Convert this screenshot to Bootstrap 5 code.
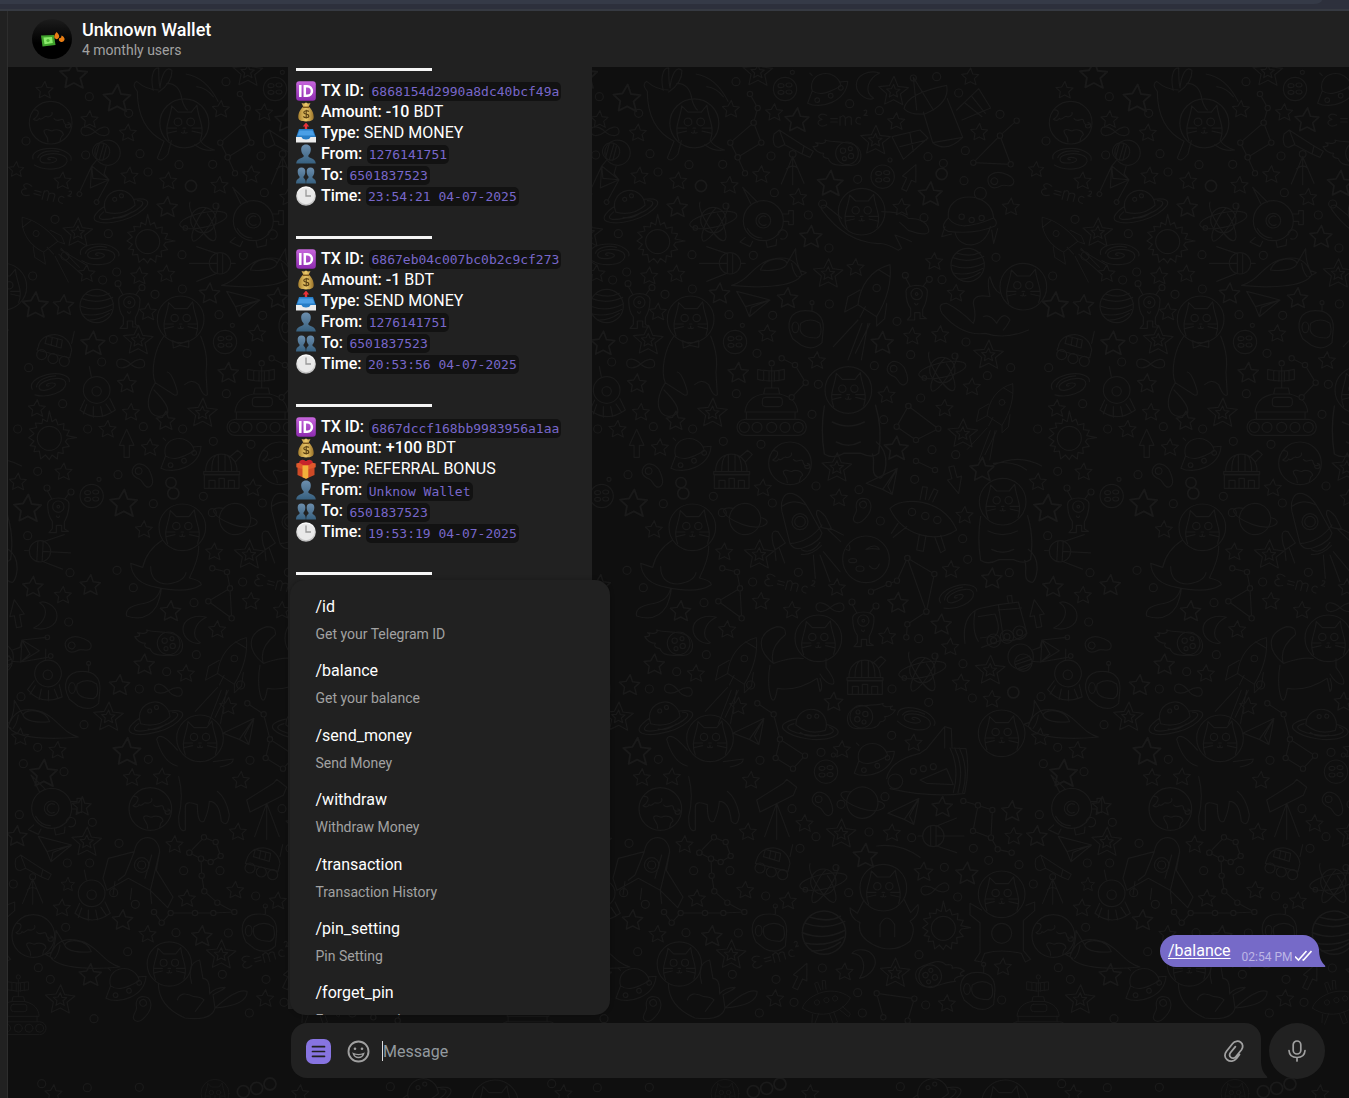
<!DOCTYPE html>
<html lang="en">
<head>
<meta charset="utf-8">
<meta name="viewport" content="width=device-width, initial-scale=1">
<title>Unknown Wallet</title>
<link href="https://cdn.jsdelivr.net/npm/bootstrap@5.3.0/dist/css/bootstrap.min.css" rel="stylesheet">
<style>
body{background:#0f0f0f;color:#fff;font-family:Roboto,"Liberation Sans",sans-serif;font-size:16px;line-height:21px}
.strip{height:11px;flex:none;background:#2d303c;border-bottom:2px solid #363a42}
.strip div{width:1322px;height:4px;background:#353a47;border-bottom-right-radius:8px 4px}
.rail{width:8px;flex:none;background:#212121;border-right:1px solid #2d2d2d}
.chat-head{height:56px;flex:none;background:#212121;padding-left:24px}
.ava{width:40px;height:40px}
.who{margin-left:10px}
.name{font-size:18px;line-height:22px;font-weight:500}
.sub{font-size:14px;line-height:18px;color:#a2a2a2}
.chat{min-height:0}
.wall{left:0;top:0;width:100%;height:100%;z-index:0}
.layer{z-index:1}
.msgs{height:956px;padding-left:280px;padding-right:30px}
.inc{width:303.500px;height:942px;background:#212121;padding-left:8px;margin-top:0}
.tx-list{margin-top:-8px}
.ln{height:21.03px;line-height:21.03px;white-space:pre}
.ln b{font-weight:500}
.sep::before{content:"";width:136px;height:3px;background:#f5f5f5}
.ln svg{width:20px;height:20px;margin-right:5px;flex:none}
.ln code{font:13px/19px "DejaVu Sans Mono",monospace;color:#7867ca;background:#121212;border-radius:5px;padding:0 2px;height:19px;margin-left:.5px;margin-top:2.500px}
.ln code.tx-hash{padding-left:3px}
.outg{height:32px;width:159px;margin-bottom:56px;background:#766ac8;border-radius:16px 16px 0 16px;padding-left:8px}
.outg u{text-underline-offset:2px;margin-top:-1px}
.outg small{font-size:12px;color:#bdb6e6;margin-left:11px;margin-top:12px}
.outg .ticks{margin:10px 0 0 3px}
.clip-ico{margin-right:16px}
.tail{position:absolute;right:-7px;bottom:0}
.cmds{position:absolute;left:282px;top:513px;width:320px;height:435px;border-radius:15px;background:#212121;box-shadow:0 0 4px rgba(0,0,0,.28);padding:16px 26px 0 25.500px}
.cmd{height:64.4px}
.cmd p{margin:0;line-height:22px;padding-bottom:6px}
.cmd span{display:block;font-size:14px;line-height:20px;color:#a2a2a2}
.bar{height:55px;padding-left:283px}
.compose{width:970px;height:55px;background:#212121;border-radius:16px 16px 0 16px;padding:1px 0 0 15px}
.caret{width:1px;height:20px;background:#ddd;margin-left:12px}
.ph{color:#939a9f}
.mic{width:56px;height:56px;background:#212121;margin-left:8px}
</style>
<script src="https://cdn.jsdelivr.net/npm/bootstrap@5.3.0/dist/js/bootstrap.bundle.min.js"></script>
</head>
<body class="vh-100 overflow-hidden d-flex flex-column">
<svg width="0" height="0" class="position-absolute">
<defs>
<linearGradient id="gp" x2="0" y2="1"><stop stop-color="#c766dc"/><stop offset="1" stop-color="#8e2bb0"/></linearGradient>
<linearGradient id="gb" x2="0" y2="1"><stop stop-color="#6c8ead"/><stop offset="1" stop-color="#37607f"/></linearGradient>
<linearGradient id="gy" x2="1"><stop stop-color="#a9812f"/><stop offset=".5" stop-color="#ecca6c"/><stop offset="1" stop-color="#9a7228"/></linearGradient>
<linearGradient id="gw" x2="0" y2="1"><stop stop-color="#fff"/><stop offset="1" stop-color="#bbb"/></linearGradient>
<symbol id="e-id" viewBox="0 0 20 20"><rect x=".2" y=".2" width="19.6" height="19.6" rx="3" fill="url(#gp)"/><path d="M4.300 4v12M8.800 5.200v9.600h2.400c6.300 0 6.300-9.600 0-9.600z" fill="none" stroke="#fff" stroke-width="2.500"/></symbol>
<symbol id="e-bag" viewBox="0 0 20 20"><path d="M7.3 4.8 5.500 1l2.500.6L10 .6l2 1 2.500-.6-1.800 3.800c3 2 5 6.500 5 10.200 0 3-2 4.400-7.700 4.400s-7.700-1.400-7.700-4.400c0-3.700 2-8.200 5-10.200z" fill="url(#gy)"/><path d="M6.800 5.300h6.400" stroke="#80591c" stroke-width="1.500"/><path d="M12.800 9.700c-1-1.400-5-1.400-5 .8 0 2.400 5 1 5 3.400 0 2.200-4.400 2.200-5.400.5M10.200 7.800v8.800" stroke="#5b4113" stroke-width="1.200" fill="none"/></symbol>
<symbol id="e-out" viewBox="0 0 20 20"><path d="M3 6h14l3 8.500v4.200H0v-4.200z" fill="#277dc6"/><path d="M3.500 7.500h13l2 5h-17z" fill="#4a9fe6"/><path d="M0 14h5.500q.8 2.500 4.500 2.500t4.500-2.500H20v5.500H0z" fill="#ececec"/><path d="M10-.5 13.200 3.500h-2v2.500h-2.400v-2.500h-2z" fill="#e8333a"/></symbol>
<symbol id="e-man" viewBox="0 0 20 20"><path d="M10 .5c3.400 0 5 2.300 4.800 5.500-.2 2.500-1.200 4.200-2.400 5.300v1.500c1.500 1.600 7 1.700 7.400 6.700H.2c.4-5 5.900-5.100 7.400-6.700v-1.500C6.400 10.200 5.400 8.500 5.200 6 5 2.800 6.600.5 10 .5z" fill="url(#gb)"/></symbol>
<symbol id="e-men" viewBox="0 0 20 20"><path id="bust" d="M5.500 2.500c2.700 0 4 1.700 3.800 4.500-.1 2-.9 3.500-1.800 4.500v1.200c1 1.200 2.300 1.400 2.300 5.800H0c0-4.400 2.500-4.600 3.500-5.800v-1.200c-.9-1-1.700-2.500-1.800-4.500C1.500 4.200 2.800 2.500 5.500 2.500z" fill="url(#gb)"/><use href="#bust" transform="matrix(-1 0 0 1 20 0)"/></symbol>
<symbol id="e-clock" viewBox="0 0 20 20"><circle cx="10" cy="10" r="9.800" fill="url(#gw)"/><circle cx="10" cy="10" r="8.300" fill="#e9e9e9"/><path d="M10 3.500V10h5" stroke="#999" stroke-width="1.300" fill="none"/></symbol>
<symbol id="e-gift" viewBox="0 0 20 20"><path d="M1.500 7 10 9l8.500-2v9L10 19.800 1.500 16z" fill="#cf4a26"/><path d="M.3 4.500 10 2l9.700 2.500v3.700L10 11 .3 8.200z" fill="#e0592c"/><path d="M6.500 6.500h5.800v12.300L10 19.800l-3.500-1.500z" fill="#f2b13b"/><path d="M3 3.500C4 0 9 0 10 3c1-3 6-3 7 .5L13 6H7z" fill="#c8232b"/></symbol>
<g id="w-star"><path d="M2-26 8-8 26-6 13 6 18 24 1 15-15 23-12 5-25-7-8-9z"/></g>
<g id="w-star2"><path d="M2-44 14-14 45-10 21 9 28 41 1 26-26 39-20 8-44-13-12-16z"/><path d="M1-20 6-6 20-5 9 4 13 18 0 11-12 18-9 4-20-6-6-7z"/></g>
<circle id="w-dot" r="12"/>
<g id="w-earth"><circle r="64"/><path d="M-50-38C-30-40-35-20-52-10q12 8 18-3c8 8 12-6 20-6 8 4 22-2 18-12M10-12c10 14 22-4 28 4 2 14 8 18 20 12M-20 24c12-12 18 8 30-2 10-2 26 0 28 14-10 6-8 14-10 20M-20 24c0 16 12 10 12 34M44 8a8 8 0 1 0 8-8"/></g>
<g id="w-sun"><circle r="36"/><path d="M0-82-6-50-20-58-22-44-42-46-38-32-60-28-46-14-62-2-46 8-58 22-42 24-46 40-30 38-26 62-12 50 0 64 8 50 24 62 26 42 42 46 40 28 60 24 48 10 54 2 82-2 52-8 60-24 42-26 44-44 26-40 20-58 8-50z"/></g>
<g id="w-saturn" transform="rotate(-12)"><path d="M-46 12c-6-34 18-56 46-56s48 26 44 54M-46 12q46 24 90-2M-46-6c-80 34-20 56 46 52s124-48 44-54M-52 10c-40 20 0 28 52 24s90-28 54-36M-28 32q28 12 56-4"/><circle cx="-12" cy="-20" r="6"/><circle cx="10" cy="-26" r="6"/></g>
<g id="w-ring" transform="rotate(20)"><circle r="47"/><path d="M-44-18c-50 10-20 36 44 36s88-44 42-38"/></g>
<g id="w-galaxy"><path d="M-58 4c-6-20 20-32 54-32 40 0 66 22 60 36M-54 22C-20 42 36 36 44 12c4-20-32-28-60-22s-28 26 0 26 38-12 20-16-24 6-10 6M-44 0c8-20 40-24 64-18"/></g>
<g id="w-atom"><circle r="38"/><ellipse rx="72" ry="22" transform="rotate(-12)"/><path d="M-40-54c-10 26 50 120 72 116 16-8-4-60-20-80M44-50c4 34-60 124-76 112-10-16 16-76 40-98"/><circle cx="38" cy="-42" r="9"/><circle cx="-54" cy="24" r="7"/></g>
<g id="w-sub"><circle r="60"/><circle r="22"/><path d="M8-12a14 14 0 1 0 0 24M-48 24q16 28 44 28M-36-48-62-100-18-56M58-20h18v-10h14v42H76V2H60M-54 50l-16 14 30 14 8-16M8 60l4 20 26-6 2-18M44 42a14 14 0 1 1 8 12"/></g>
<g id="w-probe"><circle cx="20" r="32"/><path d="M12-30v60M28-30v60M-72 0h84M52 0h14M10-30-50-50M10 30-50 54"/></g>
<g id="w-ship"><path d="M-120 46C-60 30-50-36 30-36c30 0 50 20 60 50-20 40-140 40-210 32M-34 0c14-40 74-40 80-20-6 20-50 24-80 20M46-20 72-64q0 40 14 66l18 6-22 12M60-20q4 26 16 40"/></g>
<g id="w-plane"><path d="M-50-36 50-10-12 40-24 10zM-24 10 50-10-6 12-12 40"/></g>
<g id="w-alien"><path d="M-32-16c0-24 64-24 64 0 0 30-8 44-14 54v20l12 8H10V48h-16v22h-22l10-12V36c-8-10-14-30-14-52M-20-32l-14-26M20-32l12-16M-6 20q6 10 10 0"/><circle cy="-8" r="17"/><circle cy="-8" r="4"/><circle cx="-34" cy="-64" r="9"/><circle cx="38" cy="-52" r="9"/></g>
<g id="w-ball"><circle r="50"/><path d="M-34-36q44 14 72-2M-44-22q44 18 92-4M-50 0q50 20 100-6M-44 24q50 10 90-14M-28 42q36 2 66-20"/></g>
<g id="w-button"><circle r="35"/><ellipse cx="-12" cy="-10" rx="9" ry="6"/><ellipse cx="12" cy="-12" rx="9" ry="6"/><ellipse cx="-12" cy="10" rx="9" ry="6"/><ellipse cx="12" cy="9" rx="9" ry="6"/><circle cx="22" cy="-50" r="6"/></g>
<g id="w-ufo" transform="rotate(-10)"><path d="M-44 0C-50-60 40-60 44 0-10 20-30 14-44 0M-44 0-64 34C-30 60 50 50 66-10L44-12M-36-46l-6-8"/><circle cx="-34" cy="30" r="7"/><circle cx="8" cy="24" r="7"/><circle cx="42" cy="6" r="7"/></g>
<g id="w-moon"><path d="M34-36C0-46-36-30-36 0S0 48 16 40C-16 20 0-20 34-36z"/></g>
<g id="w-emc"><path d="M-50-14c-20-10-34 6-14 12-24 6-8 28 14 16M-38-4h20M-38 6h20M-10 16v-26M-10-6c8-12 16-6 16 4v18M6-4c10-10 20-6 18 4v14M52-6c-14-10-24 20 0 18M62-28c10-6 12 6 0 14h10"/></g>
<g id="w-scope"><path d="M-56-60-40-72-22-60 34-24 28 0-24-28-42-20C-60-20-60-44-56-60M-40-72-24-30M34-24 62-8 52 10 28 0M0 8-34 90M0 8v84M0 8l34 80M-18 44q20-16 34 0"/><circle r="10"/></g>
<g id="w-comet"><path d="M-76-20c16 0 20-6 8-12 24 6 34-2 28-8 30 10 60 0 90 16 26 14 24 60-10 60S-20 40-30 16C-44 14-50 8-44 0-60 0-70-10-76-20"/><circle cx="26" r="34"/><circle cx="14" cy="-8" r="8"/><circle cx="38" cy="8" r="8"/><circle cx="18" cy="16" r="6"/><circle cx="36" cy="-14" r="6"/></g>
<g id="w-sat"><path d="M-108-24Q-100-70 20-94 30-40-46-8-90-4-108-24M-50-14-22 78Q20 110 68 62L22-54M-22 78 68 62M-80-118-20-20M-80-118-70-20M50-20 116-84 152-26 66 10M76-40l50 40M96-60l40 50M-144 60-60 40-36 64-110 128zM-120 90l80-20M-90 50l10 54"/><circle cx="-80" cy="-116" r="9"/></g>
<g id="w-rocket"><path d="M60-86C0-70-30-20-36 34L20 70C50 20 66-30 60-86M24-72 60-50M-30-10-66 10-76 56-36 34M50 30 44 76 20 98V70M-14 40-30 72M-36 80-110 160M-24 90-66 200M0 90-44 180M-6 90-26 200"/><circle cx="20" cy="-16" r="11"/></g>
<g id="w-bigrocket"><path d="M-22-84C-50-90-60-60-54-30L-30 66Q-16 90 16 76 60 60 66 34L26-38Q4-78-22-84M-54-46Q-20-70 18-50M-30 66Q30 60 66 10M-66 30q-26-10-14 40l6 14 30-20zM50-20q-4-30 26 4l20 40-30-6zM4 84q30 16 56-22M4 98q30 4 60-26M-62 80l16 44M-76 80l4 36M80 20l42 40M90 20l40 20M40 100l6 70M60 100l30 80M70 90l50 60"/><circle r="24"/><circle r="16"/></g>
<g id="w-shuttle"><path d="M-150 66Q-140 10-50-10L-30-24 24-90 44-84 46-26 88-24Q100 40 84 110-20 124-140 96M40-26q30 60 10 134M54-26q30 60 10 134M68-26q30 60 10 134M-50 70 30 36 50 84-30 80zM24-90v64"/><circle cx="-70" cy="44" r="9"/><circle cx="-40" cy="36" r="9"/><circle cx="-10" cy="30" r="9"/><circle cx="-124" cy="74" r="22"/></g>
<g id="w-upshuttle"><path d="M-22-40C-14-96 50-96 54-40L44 16 94 96 78 128 26 76-40 40-104 76-116 40-100-20-22-40-50 30M54-40 26 76M30-30 10 40M-50 30l-20 16M-80 50l-6 40M-30 70l-4 34M26 76l4 40"/><circle r="22"/><circle r="12"/></g>
<g id="w-helmet"><path d="M-42 36C-66-10-50-48-4-48S50-20 50 4L46 48Q20 74-16 56L-42 36M-18-10q30-20 58 0 10 36-10 44-60 0-48-44M16-48v-20"/><circle cx="16" cy="-72" r="6"/><ellipse cx="-34" cy="2" rx="10" ry="16"/></g>
<g id="w-tank"><rect x="-104" y="38" width="208" height="48" rx="24"/><circle cx="-82" cy="62" r="15"/><circle cx="-44" cy="62" r="15"/><circle cy="62" r="15"/><circle cx="40" cy="62" r="15"/><circle cx="80" cy="62" r="15"/><path d="M-76 38V16M70 38V16M-80 16C-76-20-50-34-24-38L24-38C60-30 76-10 78 16zM-24-38l4-18h40l4 18M0-56v-62M-42-112q42 10 80 0v30q-40 10-80 0zM-24-108v30M-8-106v30M8-106v30M22-108v30"/><rect x="-28" y="-28" width="60" height="28" rx="10"/><circle cy="-130" r="8"/></g>
<g id="w-face"><circle r="70"/><path d="M-44 50C-60 10-40-10-36-50L-18-32H20L36-52C40-10 60 10 46 48M-22 22-48 28M-22 14-48 14M22 22 48 28M22 14l26 0M-8 26q8 6 8-6 0 12 8 6M-4 14h8"/><circle cx="-18" cy="-4" r="11"/><circle cx="18" cy="-4" r="11"/></g>
<g id="w-sit"><path d="M-50 50C-80 90-90 160-76 190L-20 226q20 10 0-40-10-26-20-28M60 50c20 50 20 80 16 110l4 66q-10 10-26-30-20-20-42 0M-76 190c-50 80 0 120 36 92 10-20-30-60-40-70M-24 64l20 10 28-10v20l-26-6-20 8z"/></g>
<g id="w-fly"><path d="M-60 20-110-20q-20 0-8 16Q-50 90 50 96q20-4 60 20l10-6-20-40q30 10 50 20M60 0q60 0 80 20 50 0 60 30 10 30-60 6-10-10-26-24"/></g>
<g id="w-stand"><path d="M-60 40q-10 60 0 120 20 14 50-2h40q30 14 46 0 10-60-8-120M-40 80q40 20 80 0M-30 130q30 16 60 0M70 130c40 30 20 90 10 90-30-4-10-40-20-60"/></g>
<g id="w-bean"><path d="M-30-18c14-30 44-10 52 8s14 40-2 46-18-20-30-24-26-14-20-30"/><circle cx="-12" cy="-12" r="10"/></g>
<g id="w-saucer"><path d="M-70 4C-80-80 60-80 66 4-20 40-50 30-70 4M-70 4q-30 30 0 40 80 10 140-16 10-10-4-24M-50 46C-40 100 40 100 56 30M-80 30l-10 30 30-8M60 40l6 40 12-44"/><circle cx="26" cy="-70" r="18"/><circle cx="-30" r="8"/><circle cy="10" r="8"/><circle cx="30" cy="4" r="8"/></g>
<g id="w-pod"><circle cy="-20" r="40"/><circle cy="-16" r="14"/><path d="M-36 10-50 40q50 40 106 0L40 6M-30 24l-10 28M-10 30v32M12 30l6 30M28 22l16 24M-16-60l-6-30"/></g>
<g id="w-rover"><path d="M-50 0C-40-50 40-50 50 10L44 34-54 10zM-30-10l6-22 46 12-4 24zM-8-28l-4 24M8-24l-4 24M50-10l8-36"/><circle cx="-40" cy="24" r="15"/><circle cx="-6" cy="36" r="15"/><circle cx="28" cy="44" r="15"/></g>
<g id="w-bulb"><circle cx="-28" cy="-2" r="38"/><circle cx="-20" cy="16" r="26"/><path d="M-42 12 0-4M-44 22 4 6M-36 34 6 18M8-22 30-30 36-52 88-20 32 14 6 12M36-52 32 14M36-52 60-10 32 14M36-52 108-60M32 14 112 0"/><circle cx="112" cy="-60" r="7"/><circle cx="122" cy="-4" r="7"/></g>
<g id="w-arrow"><path d="M0-42 22 6H8v36H-8V6h-14z"/></g>
<g id="w-inf"><path d="M0 0C-16-16-42-22-42-2S-16 14 0 0 40-22 42-2 14 14 0 0"/></g>
<g id="w-obs"><path d="M-52 50V10h104v40zM-54 0H54V8H-54zM-48 0C-50-70 48-70 46 0M-30 0q0-40 14-50M-10 0v-50M10 0v-50M30 0q0-40-14-50M24-44l24-20 14 12-20 22M-38 50V26h18v24M-8 50V20H8v30M20 50V26h18v24"/></g>
<g id="w-legs"><path d="M-100-34C-70-70 60-70 100 30 40 70-60 50-100-34M-76 10-96 40M-50 20-90 52M-12 44-20 90 0 94 8 46M34 50 52 98 66 90 52 46M-10-60l8-40 14 2-6 36M16-60l16-34 12 6-16 34"/><circle cx="-34" cy="-24" r="11"/><circle cx="6" cy="-12" r="11"/><circle cx="42" r="11"/></g>
<g id="w-truck"><path d="M-90 60C-100-10-70-40-40-46L10-56 70-64 96 30Q60 60 20 50L-40 72M10-56 26 50M10-40l70-6M-60-36q-10 60 10 90M-50-20l50-8q20 50 0 66l-44 6M40-62l-4-20 14-2 2 20"/><circle cx="-4" cy="52" r="20"/><circle cx="36" cy="40" r="20"/><circle cx="74" cy="28" r="20"/><circle cx="-4" cy="52" r="9"/><circle cx="36" cy="40" r="9"/><circle cx="74" cy="28" r="9"/></g>
<g id="w-crater"><circle r="70"/><path d="M-60-30q16 10 10-12M0-30q30-20 40 0-20-4-40 0M10 20q20 20 30-6"/><ellipse cx="-40" cy="4" rx="12" ry="6"/><ellipse cx="-18" cy="28" rx="12" ry="8"/></g>
</defs>
</svg>

<div class="strip"><div></div></div>
<div class="d-flex flex-grow-1 overflow-hidden">
  <aside class="rail"></aside>
  <main class="d-flex flex-column flex-grow-1">
    <header class="chat-head d-flex align-items-center">
      <svg class="ava" viewBox="0 0 40 40"><defs><linearGradient id="ga" x2="0" y2="1"><stop stop-color="#1c1c1c"/><stop offset=".6" stop-color="#000"/></linearGradient></defs><circle cx="20" cy="20" r="20" fill="url(#ga)"/><path d="M9 16.500l13-.5 1.500 10-13 1.500z" fill="#3fa12c"/><path d="M11.500 18.500l8.500-.5.800 6-8.300 1.300z" fill="#8bec6b"/><circle cx="16" cy="21.500" r="1.600" fill="#4cb535"/><path d="M24.500 13q3.500 3 2.500 5.500-2 3-4.500.5-1-2.500 2-6zM29.500 16.500q3.500 1.500 3 4.500-1.500 3-4.500 1.500-2-1.500-.5-3.500 2 .5 2-2.500z" fill="#e87e14"/></svg>
      <div class="who">
        <div class="name">Unknown Wallet</div>
        <div class="sub">4 monthly users</div>
      </div>
    </header>
    <section class="chat flex-grow-1 position-relative overflow-hidden">
      <svg class="wall position-absolute" viewBox="8 67 1341 1031" fill="none" stroke="#1a1a1a" stroke-width="3.600" stroke-linejoin="round" stroke-linecap="round"><g id="tile"></g><use href="#tile" x="-510"/><use href="#tile" x="-1020"/><use href="#tile" x="510"/></svg>
      <div class="layer position-relative">
        <div class="msgs d-flex justify-content-between">
          <div class="inc"><div class="tx-list" id="txs"></div></div>
          <div class="outg position-relative align-self-end d-flex align-items-center">
            <u>/balance</u><small>02:54 PM</small>
            <svg class="ticks" width="17" height="12" viewBox="0 0 17 12" fill="none" stroke="#fff" stroke-width="1.600"><path d="M0 6.500 3.500 10 11.500 1M7.500 9.500 8.500 10 16.500 1"/></svg>
            <svg class="tail" width="8" height="18" viewBox="0 0 8 18"><path d="M0 0h1C1 8 3 13 7 16.500Q8 18 6 18H0z" fill="#766ac8"/></svg>
          </div>
        </div>
        <div class="bar d-flex">
          <div class="compose position-relative d-flex align-items-center">
            <svg width="25" height="25" viewBox="0 0 25 25"><rect width="25" height="25" rx="7" fill="#8774e1"/><path d="M6.500 7.700h12M6.500 12.500h12M6.500 17.300h12" stroke="#212121" stroke-width="1.700" stroke-linecap="round"/></svg>
            <svg class="ms-3" width="23" height="23" viewBox="0 0 23 23" fill="none" stroke="#a0a0a0" stroke-width="1.900"><circle cx="11.500" cy="11.500" r="10"/><path d="M6.300 13.500q5.200 2.200 10.400 0-1.200 4-5.200 4t-5.200-4z" stroke-width="1.300"/><circle cx="8" cy="8.800" r="1.300" fill="#a0a0a0" stroke="none"/><circle cx="15" cy="8.800" r="1.300" fill="#a0a0a0" stroke="none"/></svg>
            <span class="caret"></span><span class="ph">Message</span>
            <svg class="clip-ico ms-auto" width="22" height="24" viewBox="0 0 22 24" fill="none" stroke="#a0a0a0" stroke-width="1.800" stroke-linecap="round" stroke-linejoin="round"><path d="M16.500 15.500l-3 4C11 22.500 7 23 4.200 20.800S1.200 15 3.500 12.200l6.200-7.700c2-2.500 5.600-3 8-1.200s2.600 5 .8 7.400l-5.700 7c-1.300 1.700-3.500 1.900-5 .7s-1.600-3.100-.4-4.600l5-6.200"/></svg>
            <svg class="tail" width="8" height="18" viewBox="0 0 8 18"><path d="M0 0h1C1 8 3 13 7 16.500Q8 18 6 18H0z" fill="#212121"/></svg>
          </div>
          <div class="mic rounded-circle d-flex align-items-center justify-content-center">
            <svg width="18" height="22" viewBox="0 0 18 22" fill="none" stroke="#a0a0a0" stroke-width="1.700" stroke-linecap="round"><rect x="5.200" y="1" width="7.600" height="13" rx="3.800"/><path d="M1 10.500c.3 4.500 3.600 7 8 7s7.700-2.500 8-7M9 17.500V21"/></svg>
          </div>
        </div>
        <div class="cmds overflow-hidden" id="cmds"></div>
      </div>
    </section>
  </main>
</div>
<script>
// transaction history
const txs = [
  ["6868154d2990a8dc40bcf49a", "-10", "out", "SEND MONEY", "1276141751", "23:54:21 04-07-2025"],
  ["6867eb04c007bc0b2c9cf273", "-1", "out", "SEND MONEY", "1276141751", "20:53:56 04-07-2025"],
  ["6867dccf168bb9983956a1aa", "+100", "gift", "REFERRAL BONUS", "Unknow Wallet", "19:53:19 04-07-2025"]
];
const line = (icon, label, rest) => `<div class="ln d-flex align-items-center"><svg><use href="#e-${icon}"/></svg><b>${label} </b>${rest}</div>`;
const sep = '<div class="ln sep d-flex align-items-center"></div>';
document.getElementById("txs").innerHTML = txs.map(t => sep
  + line("id", "TX ID:", `<code class="tx-hash">${t[0]}</code>`)
  + line("bag", "Amount: " + t[1], "BDT")
  + line(t[2], "Type:", t[3])
  + line("man", "From:", `<code>${t[4]}</code>`)
  + line("men", "To:", `<code>6501837523</code>`)
  + line("clock", "Time:", `<code>${t[5]}</code>`)
  + '<div class="ln"></div>').join("") + sep;
// bot commands
document.getElementById("cmds").innerHTML = [["/id","Get your Telegram ID"],["/balance","Get your balance"],["/send_money","Send Money"],["/withdraw","Withdraw Money"],["/transaction","Transaction History"],["/pin_setting","Pin Setting"],["/forget_pin","Forget your pin"]]
  .map(c => `<div class="cmd"><p>${c[0]}</p><span>${c[1]}</span></div>`).join("");
// wallpaper doodles: "name x,y[,scale[,rotation]] ..." in third-of-a-pixel units
function doodles(ox, oy, spec, lines) {
  let s = "";
  for (const row of spec.trim().split("\n")) {
    const [name, ...pts] = row.trim().split(/\s+/);
    for (const p of pts) {
      const [x, y, k = 1, r = 0] = p.split(",").map(Number);
      s += `<use href="#w-${name}" transform="translate(${x} ${y}) rotate(${r}) scale(${k === -1 ? "-1 1" : k})"/>`;
    }
  }
  // constellations: joined points with a ring on each
  for (const l of lines) {
    s += `<polyline points="${l}"/>` + l.split(" ").map(p => { const [x, y] = p.split(","); return `<circle cx="${x}" cy="${y}" r="8" fill="#0f0f0f"/>`; }).join("");
  }
  return `<g transform="translate(${ox} ${oy}) scale(.33333)">${s}</g>`;
}
document.getElementById("tile").innerHTML = doodles(600, 60, `
star 113,218 522,157 888,184 1110,50 1137,216 118,347 234,362 388,375 483,343 594,411 231,441,1.2 904,441 1232,440 392,147 766,622 228,641 147,647 1002,604 1067,699 173,755 501,820 650,901 414,938,1.2 562,714,1.2 358,700,1.2 936,828 1020,823 846,848,1.3 110,970,1.1 122,1056 226,1082,1.1 52,1107 179,1162 859,1004 1033,1044 1115,980 632,530,1.3 590,180,1.4 990,402,1.4 690,370,1.5 80,115,1.6 888,1165,1.4
star2 826,240 880,93 473,35 684,640 144,840 337,1058 1165,884 1088,1120
dot 116,160 150,281 267,314 368,313 174,336 408,65 513,288 523,398 668,432 625,465 687,564 749,131 838,152 1010,50 1076,99 1200,163 1096,272 984,290 773,358 1092,362 972,473 1188,592 1026,659 55,521 276,584 460,586 277,687 195,703 387,764 518,766 688,732 891,784 70,838 35,906 471,880 409,1001 655,973 636,1063 823,917 932,884 1098,846 851,1079 962,1014 1162,947 160,1100 278,1107 370,1144 483,1153 996,1169 1232,923 80,636 38,660 303,378,1.4 1030,310 1025,342,1.4
saturn 90,435
sun 173,545
galaxy 30,580
atom 340,480 1027,930
sub 490,482
probe 370,610
ship 515,630
plane 460,730
alien 118,735 950,710
ball 20,738 1103,615
button 555,87 848,350 405,846
ufo 680,85
moon 805,75
emc 730,180
scope 578,282
comet 715,280
sat 1020,170
face 283,190,1.05 785,455 272,778 745,990 1270,680
fly 785,455
sit 272,778
stand 745,990,1.2
rocket 810,700
helmet 620,800
tank 515,1040
bean 893,938 1200,362,1,-50
saucer 1115,470
rocket 1190,1040,.8
inf 122,912 15,215
pod 20,1010
arrow 930,352,1,25 110,1150
bulb 35,300,1,125
`, ["450,102 473,144 461,188 391,248 413,292 435,340", "461,188 484,248 413,292", "1250,182 1200,227 1120,308 1232,313 1200,227", "545,895 585,915 617,968 575,1012", "925,1038 890,1100 948,1140 1015,1106 925,1038"])
+ `<g transform="translate(600 60) scale(.33333)"><path d="M205 90Q170 90 140 64q-16 10 2 30c0 60 20 120 80 150l-20 50q10 16 32-12l10-40M190 92c-10-40 0-70 16-68 0 20 0 40 4 60 4-40 20-70 36-52 0 30-20 50-40 64M230 70q40 0 46 50 6 20 16 30M330 240q10 20 44 30-30 6-60-16M288 42q60 10 96 82M320 80q30 4 50 30M1200 700q-20-10-30-50-10 10 0 60-50-10-50 20 10 40 0 60-40-40-80-60-30 0-14 30 60 70 130 60 60 20 130-10M1150 770q20-10 40 20 20-40 40-10-10 20-20 30"/></g>`
+ doodles(1020, 60, `
star 133,90 268,178 187,362 190,735,1.2 259,640 110,1045 105,735,1.5 278,850,1.4 48,328,.9 220,45,1.6
star2 233,517
dot 268,110 78,243 257,285 165,478 195,588 98,648 86,923 188,1031 53,1107 263,1107
earth 152,188
galaxy 157,293 152,970,1,-14
emc 140,405,1,15
rocket 115,540,.8,-70
rover 165,860
sun 148,1135
`, [])
+ doodles(610, 450, `
star 131,238 458,113 686,143 342,305 452,453 545,480 211,483,1.2 351,538 257,670 132,643,1.2 58,705,1.2 384,768 680,412 831,558 863,458,1.2 1063,195 1022,358 1020,590 993,523,1.2 1145,385,1.2 1283,95 1420,65 1418,435 1328,410,1.2 1145,747 1052,698 670,755,1.1 910,878 695,898 1290,860 1402,900 1500,405,1.2 70,160,1.6 1312,175,1.6 80,905,1.6 1115,58,1.4 1360,970,1.6
star2 680,52 447,313 1140,660 25,800
dot 54,74 310,139 160,161 487,159 337,188 618,108 747,119 914,88 811,213 1058,266 1073,328 1198,368 1313,257 1343,64 1440,368 51,361 100,413 282,458 428,396 565,367 289,614 200,665 118,717 422,705 846,717 926,566 1059,641 1087,744 956,757 1293,740 1436,516 845,856 633,907 450,931 145,928 1343,892 1300,941 1422,965 1482,824 1037,14 213,98,1.3 220,130,1.4 1210,727,1.4
ufo 240,10 790,925
obs 365,65 765,683
earth 540,40
face 247,232 1178,155 625,565 300,865 1175,850
stand 1178,155,1.1
ring 405,207
bigrocket 570,215
rocket 385,640,.9
bean 128,75 755,180,1,60 1462,585,1,-50
legs 940,210
plane 830,95,1,-40 430,845,1,-40
crater 768,328
galaxy 1045,435,1,-20 920,805,1,14
truck 1155,520
alien 1405,178 760,520
probe 1370,305,1,183
button 1505,138 648,965
moon 285,538 1365,498,1,180
arrow 1035,90,1,165 1280,490,1,-10
comet 180,580 780,800,-1
atom 937,660
helmet 1480,712
inf 660,473 205,722,1,10
saturn 605,822,1,24 165,800
ship 1345,815,-1
shuttle 980,920
pod 1370,690,1,12
emc 540,405,1,14
bulb 1260,622
`, ["337,355 381,366 390,415 325,454 395,505 390,415", "783,425 836,402 861,392 892,324 973,372 949,485 892,523 889,562", "892,324 949,485", "442,760 491,793 510,868 497,924 549,956 585,917 510,868", "918,33 975,60"])
+ `<g transform="translate(610 450) scale(.33333)"><path d="M490 640C440 600 440 550 500 530q30 0 26 24-50 40-36 86M490 640q60-20 90-14M480 645q-10 60 4 100 10 20 18-30 60 10 120-30l8 40q10-10 0-40M648 626v26q30 40 22 50-20 4-40-30M1145 48q80-40 150 0M1150 40q60-10 100 20M188 270Q140 300 128 352L92 340Q96 400 170 412q90 20 134-8 0-12-36-20 30-60 28-96M152 350q0 50 50 52 50-6 56-34M182 416q-10 40-60 46-50 10-42 36 60 20 90-30 12-30 14-52M232 900Q180 840 170 868q20 70 62 80M340 935l60-8q0 16-40 24"/></g>`
+ doodles(610, 770, `
star 95,22 185,20 422,30 223,223 413,185 583,160 405,360 260,385 533,392 67,450,1.2 142,492 305,498,1.2 495,685 703,605 845,188 940,305,1.1 1070,310,1.3 996,110,1.2 1205,123,1.2 1210,198 1280,198,1.2 1475,108,1.1 1433,343,.8 1415,413 1178,590 1010,700 1500,615,1.3 765,257,1.4 600,970 1390,970
star2 693,190 363,553 855,608 1410,688 1490,215
dot 57,220 251,302 360,302 41,368 106,403 228,488 385,489 83,545 367,613 498,628 552,697 448,729 546,116 618,200 570,235 777,186 905,203 825,80 693,103 716,368 467,378 637,594 743,668 757,729 947,705 927,554 1003,292 1043,381 1090,235 1136,271 1227,284 1270,342 1288,134 1432,279 1499,279 1427,472 1381,628 1345,593 1175,690 1512,746 1507,157 118,952 871,950 1355,941 1492,953 430,965,1.5 470,955,1.5 510,942,1.5
earth 151,117 1330,498
scope 1328,320,.9
upshuttle 125,285
rover 490,270
atom 640,335
ring 757,98
plane 895,125,1,-40 1395,235
probe 990,198,1,180
sub 1385,115
face 820,353 1175,373 208,582,.95 345,970,.6 1185,1000
sun 1000,475
ball 642,488,1.3
helmet 480,480 1105,655
emc 500,560,1,-15
arrow 573,618,1,25
moon 760,577,1,150
comet 985,610,1,160
tank 1285,725,.8
ufo 75,640
bean 125,715,1,60 638,100
legs 650,700,.7,-30
inf 975,358,1,-10
ship 1470,545,-1
pod 1505,390
saturn 970,970
`, ["268,248 312,202 347,216 362,258 332,276 303,266 268,248", "303,266 305,317 313,364 352,398 403,426 340,429 285,429 212,429 185,458 162,426", "1060,93 1104,106 1147,120 1143,203 1089,183 1104,106", "1143,203 1163,238 1205,248", "820,742 800,670 913,686 893,752"])
+ `<g transform="translate(610 770) scale(.33333)"><path d="M1115 420 1080 400v34l30 24v90l-16 24 20 4 10-26q50-14 110 0l12 26 16-8-22-26v-90l34-30v-26l-26 10M800 228q70-10 130 34M236 20q16 60 0 120 0 50 20 40v-70q0-20 36-6 0 60 20 50 14-30 16-60 30 0 36 60 20 20 24-20-10-50-36-70M440 90l80-50 10-12 30 24-10 24-100 50zM500 100l-36 100M500 100v108M500 100l38 100M762 390l-20 40-22-16q0 30 30 44-10 40 40 66 60 30 110-10 20-40 0-60 30-20 24-50l-22 24-20-40M810 500v-36q20-40 44 0v36M175 640q0 70 80 104 80 10 90-30 100-10 96-50-30-10-96 50l-6-40q40-20 36-22-30 0-46 20 0-50-20-46l-10-56q-40 10-24 70M232 690q10-30 50-10 20 0 30 10l-26 34"/><circle cx="1175" cy="490" r="30"/></g>`;
</script>
</body>
</html>
